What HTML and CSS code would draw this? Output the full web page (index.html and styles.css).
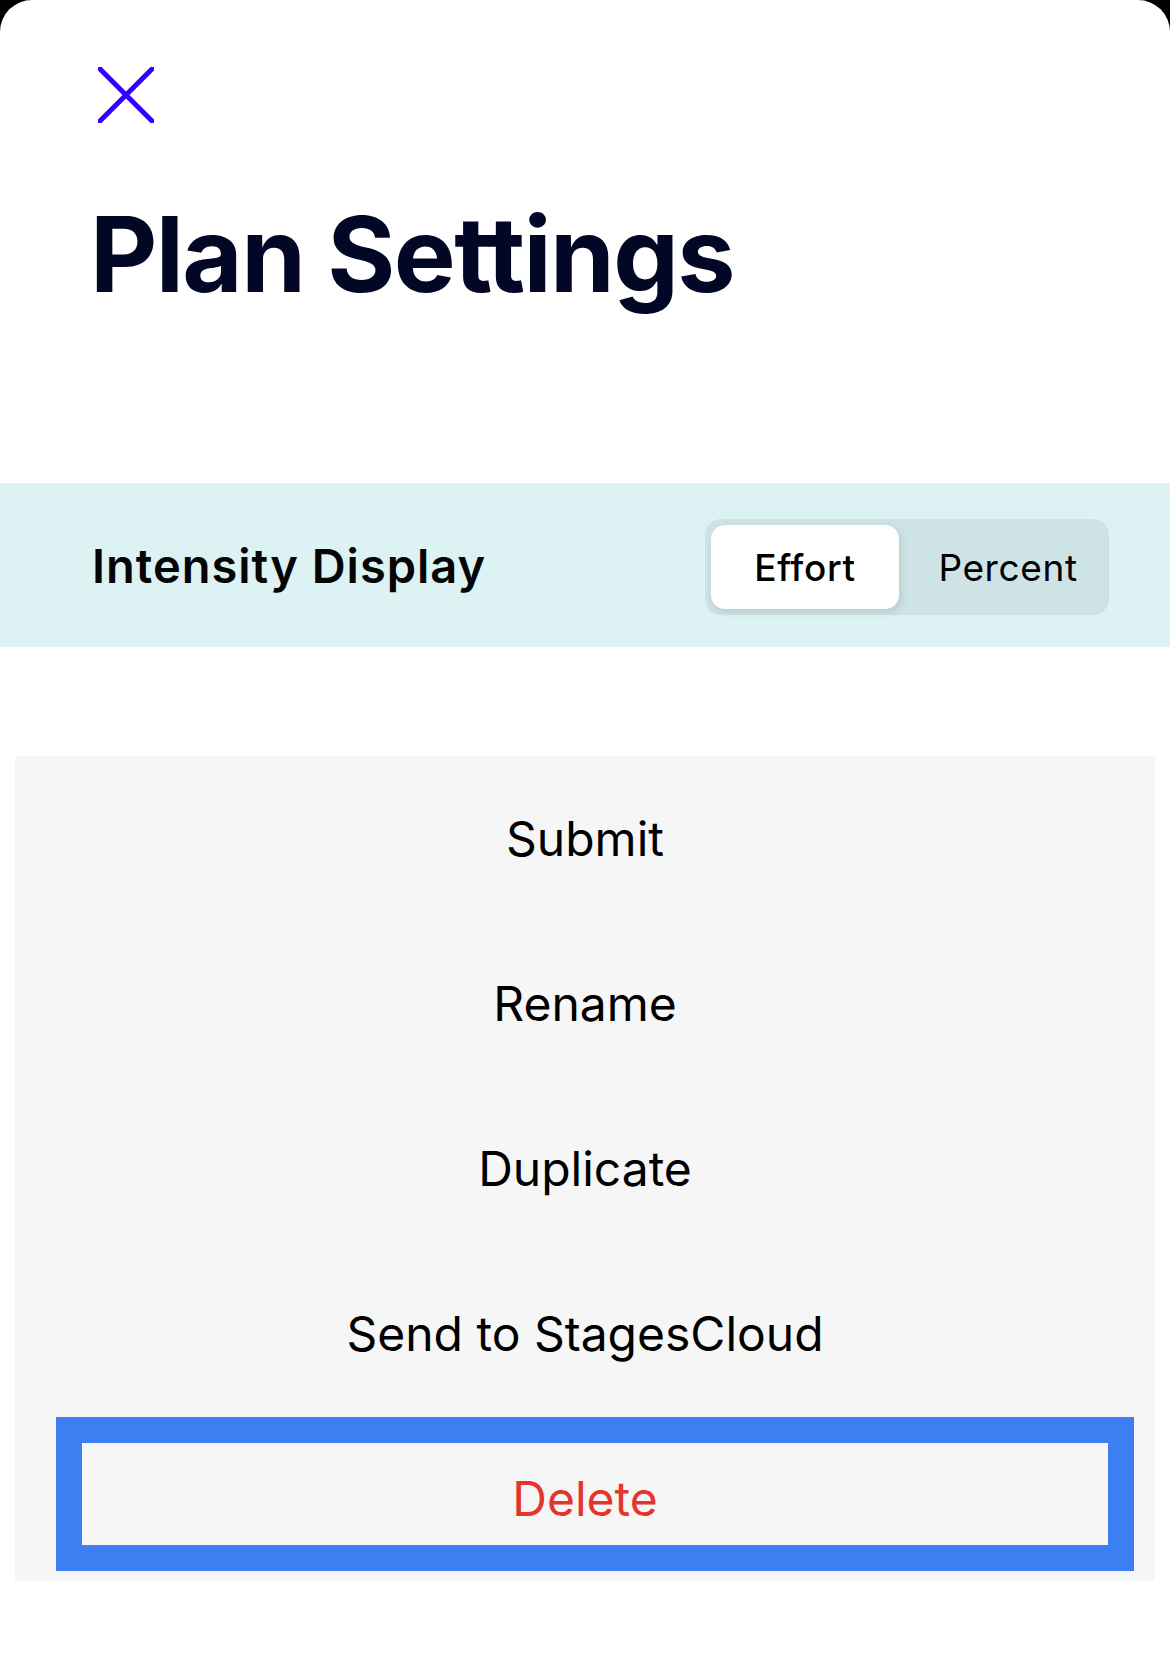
FILE: index.html
```html
<!DOCTYPE html>
<html lang="en">
<head>
<meta charset="utf-8">
<title>Plan Settings</title>
<link rel="stylesheet" href="styles.css">
</head>
<body>
<div class="sheet">
  <div class="close">
    <svg width="56" height="56" viewBox="0 0 56 56" aria-label="Close">
      <path d="M2 2 L54 54 M54 2 L2 54" stroke="#3300ff" stroke-width="5" stroke-linecap="square" fill="none"/>
    </svg>
  </div>
  <h1 class="title">Plan Settings</h1>
  <div class="intensity">
    <div class="intensity-label">Intensity Display</div>
    <div class="segmented">
      <div class="seg seg-active">Effort</div>
      <div class="seg seg-percent">Percent</div>
    </div>
  </div>
  <div class="actions">
    <div class="action">Submit</div>
    <div class="action">Rename</div>
    <div class="action">Duplicate</div>
    <div class="action">Send to StagesCloud</div>
    <div class="action action-delete">Delete</div>
  </div>
</div>
</body>
</html>
```

FILE: styles.css
```css
html, body {
  margin: 0;
  padding: 0;
  background: #000;
}
body {
  font-family: Inter, "Noto Sans", "Liberation Sans", sans-serif;
  color: #000;
}
.sheet {
  background: #fff;
  border-radius: 32px 32px 0 0;
  min-height: 1666px;
  box-sizing: border-box;
  padding-top: 67px;
}
.close {
  margin-left: 98px;
  width: 56px;
  height: 56px;
}
.close svg {
  display: block;
}
.title {
  margin: 79px 0 0 90px;
  font-size: 104px;
  line-height: 104px;
  font-weight: 700;
  letter-spacing: -1.6px;
  color: #020726;
}
.intensity {
  margin-top: 177px;
  height: 164px;
  background: #dcf2f3;
  display: flex;
  align-items: center;
  justify-content: space-between;
  padding: 0 61px 0 92px;
}
.intensity-label {
  font-size: 47px;
  font-weight: 600;
  color: #050505;
  letter-spacing: 1px;
}
.segmented {
  display: flex;
  padding: 6px;
  margin-top: 4px;
  background: #cde3e5;
  border-radius: 16px;
}
.seg {
  height: 84px;
  display: flex;
  align-items: center;
  justify-content: center;
  font-size: 37px;
  letter-spacing: 0.6px;
  color: #000;
}
.seg-active {
  width: 188px;
  background: #fff;
  border-radius: 14px;
  font-weight: 500;
  box-shadow: 2px 3px 8px rgba(0, 40, 50, 0.12);
}
.seg-percent {
  width: 204px;
  box-sizing: border-box;
  padding-left: 14px;
}
.actions {
  margin: 109px 15px 0;
  background: #f6f6f6;
}
.action {
  height: 165px;
  display: flex;
  align-items: center;
  justify-content: center;
  font-size: 48px;
  color: #000;
}
.action-delete {
  position: relative;
  color: #e5342a;
}
.action-delete::after {
  content: "";
  position: absolute;
  left: 41px;
  right: 21px;
  top: 1px;
  bottom: 10px;
  border: 26px solid #3d7ef2;
}
```
